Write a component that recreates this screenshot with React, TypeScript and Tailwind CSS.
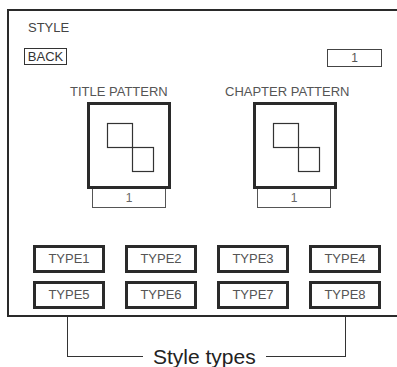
import React from 'react'

const TYPES = ['TYPE1', 'TYPE2', 'TYPE3', 'TYPE4', 'TYPE5', 'TYPE6', 'TYPE7', 'TYPE8']

function Squares() {
  // two overlapping-corner squares, the "pattern" glyph
  return (
    <svg width="78" height="81" viewBox="0 0 78 81" className="block">
      <rect x="17.5" y="18.5" width="25" height="24" fill="none" stroke="#333" strokeWidth="1.2" />
      <rect x="42.5" y="42.5" width="21" height="24" fill="none" stroke="#333" strokeWidth="1.2" />
    </svg>
  )
}

function PatternBlock({ label, boxOffset, countOffset }: { label: string; boxOffset: string; countOffset: string }) {
  return (
    <div className="flex flex-col">
      <span className="text-[13px] leading-[15px] text-[#555]">{label}</span>
      <div className={`${boxOffset} mt-[3px] w-[84px] h-[87px] border-[3px] border-[#2a2a2a]`}>
        <Squares />
      </div>
      <div className={`${countOffset} w-[74px] h-[19px] border border-t-0 border-[#555] flex items-center justify-center text-[12px] text-[#666]`}>
        1
      </div>
    </div>
  )
}

export default function App() {
  return (
    <div className="w-[397px] h-[367px] bg-white overflow-hidden" style={{ fontFamily: '"Liberation Sans", Arial, sans-serif' }}>
      {/* main frame, right edge runs off the picture */}
      <div className="mt-[9px] ml-[7px] w-[400px] h-[308px] border-t-2 border-l-2 border-b-2 border-[#2a2a2a]">
        <div className="ml-[19px] mt-[9px] text-[13px] leading-[15px] text-[#444]">STYLE</div>

        <div className="flex items-start mt-[13px] ml-[15px]">
          <div className="w-[43px] h-[17px] border border-[#333] flex items-center justify-center text-[13px] leading-[15px] text-[#333]">
            BACK
          </div>
          <div className="ml-[260px] mt-px w-[55px] h-[18px] border border-[#444] flex items-center justify-center text-[12px] text-[#555]">
            1
          </div>
        </div>

        <div className="flex mt-[17px] ml-[61px]">
          <PatternBlock label="TITLE PATTERN" boxOffset="ml-[17px]" countOffset="ml-[22px]" />
          <div className="ml-[54px]">
            <PatternBlock label="CHAPTER PATTERN" boxOffset="ml-[28px]" countOffset="ml-[32px]" />
          </div>
        </div>

        <div className="mt-[37px] ml-[24px] grid grid-cols-[repeat(4,72px)] gap-x-[20px] gap-y-[8px]">
          {TYPES.map((t) => (
            <div key={t} className="h-[28px] border-[3px] border-[#2a2a2a] flex items-center justify-center text-[13px] text-[#555]">
              {t}
            </div>
          ))}
        </div>
      </div>

      {/* bracket label under the type buttons */}
      <div className="flex items-start ml-[67px]">
        <div className="w-[76px] h-[40px] border-l border-b border-[#333]" />
        <span className="mt-[28px] mx-[10px] text-[21px] leading-[24px] text-[#222]">Style types</span>
        <div className="w-[80px] h-[40px] border-r border-b border-[#333]" />
      </div>
    </div>
  )
}
